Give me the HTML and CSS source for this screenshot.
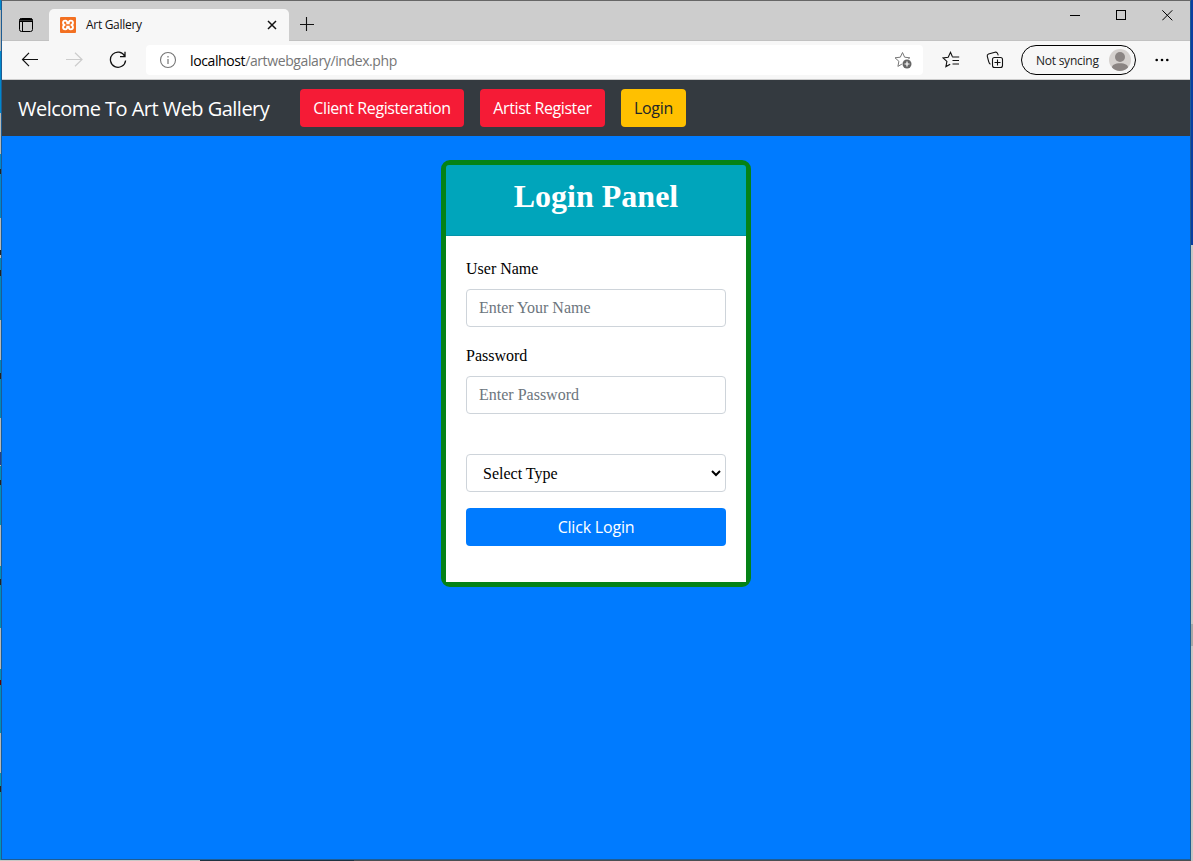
FILE: index.html
```html
<!DOCTYPE html>
<html lang="en">
<head>
<meta charset="utf-8">
<title>Art Gallery</title>
<link rel="stylesheet" href="styles.css">
</head>
<body>
<div class="desktop">
  <div class="window">
    <div class="tabstrip">
      <svg class="tab-actions" width="16" height="16" viewBox="0 0 16 16" fill="none" stroke="#000"><rect x="1.5" y="1.500" width="13" height="13" rx="2"/><path d="M1.500 3h13M1.500 4.500h13M4.500 5v9.500"/><path d="M2 2.500h12" stroke-width="2"/></svg>
      <div class="tab">
        <svg width="16" height="16" viewBox="0 0 16 16"><rect width="16" height="16" rx="1" fill="#f37021"/><path d="M5.300 3.600c-3 0-3 4 0 4.300-3 .4-3 4.500 0 4.500 1.700 0 2-1.500 2-2.800h1.400c0 1.300.3 2.800 2 2.800 3 0 3-4.100 0-4.500 3-.3 3-4.300 0-4.300-1.700 0-2 1.300-2 2.600H7.300c0-1.300-.3-2.600-2-2.600z" fill="none" stroke="#fff" stroke-width="1.900"/></svg>
        <span class="tab-title">Art Gallery</span>
        <svg class="tab-close" width="10" height="10" viewBox="0 0 10 10" stroke="#111" stroke-width="1.500"><path d="M1 1l8 8M9 1L1 9"/></svg>
      </div>
      <svg class="new-tab" width="14" height="14" viewBox="0 0 14 14" stroke="#111" stroke-width="1.100"><path d="M6.500 0v14M0 7.500h14"/></svg>
      <div class="controls">
        <svg width="11" height="11" viewBox="0 0 11 11" stroke="#000"><path d="M0 5.500h10"/></svg>
        <svg width="11" height="11" viewBox="0 0 11 11" stroke="#000" fill="none"><rect x=".5" y=".5" width="9" height="9"/></svg>
        <svg width="11" height="11" viewBox="0 0 11 11" stroke="#000"><path d="M.3 .3l10 10M10.300.3l-10 10"/></svg>
      </div>
    </div>
    <div class="toolbar">
      <svg class="back" width="18" height="16" viewBox="0 0 18 16" fill="none" stroke="#111" stroke-width="1.200"><path d="M17 7.500H1.500M8 .8L1.500 7.500l6.500 6.700"/></svg>
      <svg class="forward" width="18" height="16" viewBox="0 0 18 16" fill="none" stroke="#ccc" stroke-width="1.200"><path d="M1 7.500h16M10 .8l7 6.700-7 6.700"/></svg>
      <svg class="reload" width="18" height="18" viewBox="0 0 18 18" fill="none" stroke="#111" stroke-width="1.300"><path d="M15.800 5.200A7.600 7.600 0 1 0 16.600 9.500M16 .8v4.900h-5"/></svg>
      <div class="address">
        <svg width="18" height="18" viewBox="0 0 18 18" fill="none" stroke="#767676"><circle cx="9" cy="9" r="7.500" stroke-width="1.100"/><path d="M9 8v5M9 5v1.500" stroke-width="1.200"/></svg>
        <span class="url"><b>localhost</b>/artwebgalary/index.php</span>
        <svg class="fav-add" width="18" height="18" viewBox="0 0 18 18"><path d="M8.500 1.500l2.100 4.700 5.200.6-3.900 3.500 1 5.100-4.500-2.600-4.500 2.600 1-5.100L1 6.800l5.300-.6z" fill="none" stroke="#777"/><circle cx="13" cy="13" r="5.200" fill="#fff"/><circle cx="13" cy="13" r="4.500" fill="#666"/><path d="M13 10.500v5M10.500 13h5" stroke="#fff" stroke-width="1.200"/></svg>
      </div>
      <svg class="favorites" width="18" height="18" viewBox="0 0 18 18" fill="none" stroke="#111" stroke-width="1.100"><path d="M10.300 5.500L8.500 1.300 6.200 6.200 1 6.900l3.900 3.500-1 5.200 4.300-2.300M10.200 6h7M10.500 9.500H17M10.500 13H17"/></svg>
      <svg class="collections" width="18" height="18" viewBox="0 0 18 18" fill="none" stroke="#111" stroke-width="1.100"><rect x="6.500" y="6.500" width="10" height="10" rx="2"/><path d="M11.500 8.500v6M8.500 11.500h6M4.500 13.300C3.300 12.800 3 11.800 2.700 10.700L1.300 5.400Q.8 3.600 2.500 3L9 1.200q1.800-.5 2.500 1.200l.8 2"/></svg>
      <div class="profile"><span>Not syncing</span><svg width="22" height="22" viewBox="0 0 22 22"><circle cx="11" cy="11" r="11" fill="#d5d1ce"/><circle cx="11" cy="8" r="5" fill="#8b8583"/><path d="M3 18.500c0-2.500 3-4.200 8-4.200s8 1.700 8 4.200a11 11 0 0 1-16 0z" fill="#8b8583"/></svg></div>
      <svg class="more" width="14" height="4" viewBox="0 0 14 4"><circle cx="1.700" cy="2" r="1.300"/><circle cx="7" cy="2" r="1.300"/><circle cx="12.300" cy="2" r="1.300"/></svg>
    </div>
    <nav class="navbar">
      <span class="brand">Welcome To Art Web Gallery</span>
      <a class="btn btn-client">Client Registeration</a>
      <a class="btn btn-artist">Artist Register</a>
      <a class="btn btn-login">Login</a>
    </nav>
    <main class="page">
      <form class="card">
        <div class="card-header"><h1>Login Panel</h1></div>
        <div class="card-body">
          <label>User Name</label>
          <input class="field" type="text" placeholder="Enter Your Name">
          <label>Password</label>
          <input class="field" type="password" placeholder="Enter Password">
          <div class="select field"><span>Select Type</span><svg width="10" height="7" viewBox="0 0 10 7" fill="none" stroke="#000" stroke-width="2"><path d="M1 1l4 4 4-4"/></svg></div>
          <button class="submit" type="button">Click Login</button>
        </div>
      </form>
    </main>
  </div>
</div>
</body>
</html>
```

FILE: styles.css
```css
* { box-sizing: border-box; }
body { margin: 0; font-family: "Open Sans", "Noto Sans", sans-serif; }
svg { display: block; flex: none; }
span, label, a { white-space: nowrap; }

/* Slivers of the desktop visible around the window edges */
.desktop {
  width: 1193px;
  height: 861px;
  padding: 0 2px 1px 1px;
  background:
    linear-gradient(#0a3fa0, #0a3fa0) right top / 2px 245px no-repeat,
    linear-gradient(#a9a9a7, #a9a9a7) right 624px / 2px 22px no-repeat,
    linear-gradient(#c8c8c5, #c8c8c5) right bottom / 2px 616px no-repeat,
    linear-gradient(#c8c8c5, #c8c8c5) left bottom / 200px 1px no-repeat,
    linear-gradient(#1f3340, #1f3340) 200px 100% / 154px 1px no-repeat,
    linear-gradient(#4a4f52, #4a4f52) 354px 100% / 837px 1px no-repeat,
    linear-gradient(#222, #222) 0 169px / 1px 5px no-repeat,
    linear-gradient(#222, #222) 0 250px / 1px 5px no-repeat,
    linear-gradient(#222, #222) 0 270px / 1px 6px no-repeat,
    linear-gradient(#222, #222) 0 373px / 1px 6px no-repeat,
    linear-gradient(#23408a, #23408a) 0 452px / 1px 13px no-repeat,
    linear-gradient(#222, #222) 0 480px / 1px 5px no-repeat,
    linear-gradient(#222, #222) 0 579px / 1px 6px no-repeat,
    linear-gradient(#600, #600) 0 680px / 1px 5px no-repeat,
    linear-gradient(#222, #222) 0 786px / 1px 6px no-repeat,
    linear-gradient(#0088cc 0 10px, #b8b8b4 10px 51px, #0088cc 51px 113px, #b8b8b4 113px 154px, #0088cc 154px 218px, #b8b8b4 218px 258px, #0088bb 258px 320px, #b8b8b4 320px 360px, #0088bb 360px 418px, #b8b8b4 418px 466px, #0090b8 466px 525px, #b8b8b4 525px 566px, #0090b8 566px 628px, #b8b8b4 628px 669px, #0090b8 669px 733px, #b8b8b4 733px 773px, #0098b8 773px) left top / 1px 100% no-repeat;
}
.window {
  display: flex;
  flex-direction: column;
  height: 860px;
  border: 1px solid #1e5c93;
  border-top-color: #666;
}

.tabstrip { display: flex; height: 40px; background: #cdcdcd; border-bottom: 1px solid #c2c2c2; }
.tab-actions { margin: 16px 0 0 16px; }
.tab {
  display: flex;
  align-items: center;
  width: 240px;
  height: 32px;
  margin: 8px 0 0 15px;
  padding: 0 12px 0 11px;
  background: #f7f7f7;
  border-radius: 5px 5px 0 0;
}
.tab-title { margin-left: 10px; padding-bottom: 1px; font-size: 12px; letter-spacing: -0.3px; color: #111; }
.tab-close { margin-left: auto; }
.new-tab { margin: 16px 0 0 11px; }
.controls { display: flex; gap: 35px; margin: 9px 17px 0 auto; }

.toolbar { display: flex; align-items: center; height: 39px; background: #f7f7f7; border-bottom: 1px solid #ccc; }
.back { margin-left: 19px; }
.forward { margin-left: 26px; }
.reload { margin-left: 26px; }
.address {
  display: flex;
  align-items: center;
  width: 777px;
  height: 30px;
  margin-left: 19px;
  padding: 0 11px 0 13px;
  background: #fff;
  border-radius: 4px;
}
.url { margin-left: 13px; font-size: 14px; letter-spacing: -0.39px; color: #767676; }
.url b { font-weight: 400; color: #000; }
.fav-add { margin-left: auto; }
.favorites { margin-left: 19px; }
.collections { margin-left: 26px; }
.profile {
  display: flex;
  align-items: center;
  justify-content: space-between;
  width: 115px;
  height: 30px;
  margin-left: 17px;
  padding: 0 4px 0 14px;
  border: 1px solid #000;
  border-radius: 15px;
  font-size: 12px;
  letter-spacing: -0.25px;
  color: #222;
}
.more { margin-left: 19px; }

.navbar { display: flex; align-items: center; height: 56px; padding-left: 16px; background: #343a40; font-size: 16px; }
.brand { width: 282px; padding-top: 1px; font-size: 20px; letter-spacing: -0.53px; color: #fff; }
.btn { height: 38px; margin-right: 16px; border-radius: 4px; line-height: 39px; text-align: center; color: #fff; }
.btn-client { width: 164px; background: #f51b36; letter-spacing: -0.4px; }
.btn-artist { width: 125px; background: #f51b36; letter-spacing: -0.4px; }
.btn-login { width: 65px; background: #ffc000; color: #212529; letter-spacing: -0.3px; }

.page { flex: 1; padding-top: 24px; background: #007bff; }
.card {
  width: 310px;
  height: 427px;
  margin: 0 auto;
  border: 5px solid #058216;
  border-radius: 9px;
  background: #058216;
  font-family: "Liberation Serif", serif;
}
.card-header { height: 71px; padding-top: 12px; background: #00a5bb; border-bottom: 1px solid #0394a9; border-radius: 3px 3px 0 0; }
h1 { margin: 0; font-size: 32px; line-height: 38px; text-align: center; color: #fff; }
.card-body { display: flex; flex-direction: column; height: 346px; padding: 21px 20px 0; background: #fff; font-size: 16px; }
label { height: 24px; margin-bottom: 8px; line-height: 24px; color: #000; }
.field {
  width: 100%;
  height: 38px;
  margin: 0 0 17px;
  padding: 0 12px;
  border: 1px solid #ced4da;
  border-radius: 4px;
  background: #fff;
  font: 16px "Liberation Serif", serif;
}
.field::placeholder { color: #6c757d; opacity: 1; }
.select { display: flex; align-items: center; justify-content: space-between; margin: 23px 0 16px; padding: 0 4px 0 16px; }
.select span { padding-top: 2px; }
.submit {
  height: 38px;
  border: 0;
  border-radius: 4px;
  background: #007bff;
  color: #fff;
  font: 16px "Open Sans", sans-serif;
  letter-spacing: -0.2px;
}
```
